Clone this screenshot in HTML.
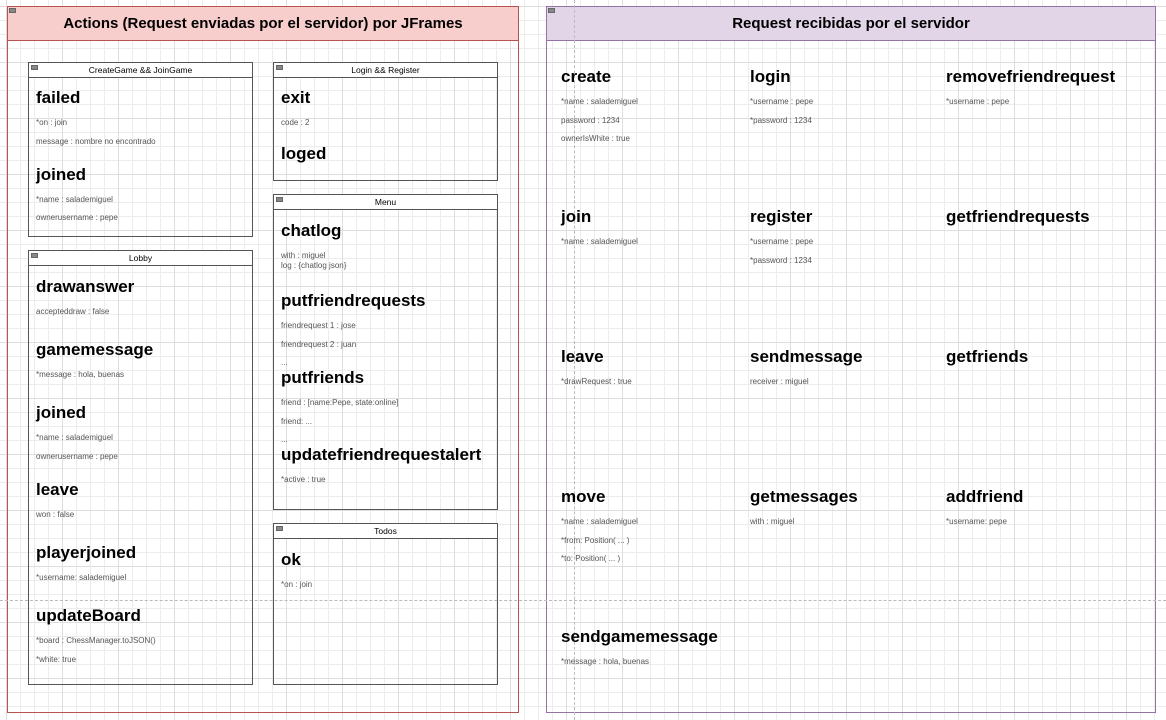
<!DOCTYPE html>
<html><head><meta charset="utf-8"><style>
*{margin:0;padding:0;box-sizing:border-box}
body{width:1166px;height:720px;overflow:hidden;position:relative;font-family:"Liberation Sans",Arial,sans-serif;background:#fff;
background-image:linear-gradient(#dedede 1px,transparent 1px),linear-gradient(90deg,#dedede 1px,transparent 1px),linear-gradient(#ececec 1px,transparent 1px),linear-gradient(90deg,#ececec 1px,transparent 1px);
background-size:56px 56px,56px 56px,14px 14px,14px 14px;background-position:6px 6px}
.a{position:absolute}
.box{position:absolute;border:1px solid #555}
.hd{position:absolute;left:0;right:0;top:0;height:15px;border-bottom:1px solid #555;background:#fff;font-size:8.5px;text-align:center;line-height:14px;color:#000}
.mn{position:absolute;left:2px;top:2px;width:7px;height:5px;background:#888;border:1px solid #666}
.t{position:absolute;font-size:17px;font-weight:bold;line-height:20px;white-space:nowrap;color:#000;margin-top:1px}
.p{position:absolute;font-size:8px;line-height:10px;color:#555;white-space:nowrap}
</style></head><body>
<div class="a" style="left:7px;top:6px;width:512px;height:707px;border:1px solid #b85450"></div>
<div class="a" style="left:7px;top:6px;width:512px;height:35px;border:1px solid #b85450;background:#f8cecc;font-size:15px;font-weight:bold;text-align:center;line-height:33px">Actions (Request enviadas por el servidor) por JFrames</div>
<div class="mn" style="left:9px;top:8px"></div>
<div class="a" style="left:546px;top:6px;width:610px;height:707px;border:1px solid #9673a6"></div>
<div class="a" style="left:546px;top:6px;width:610px;height:35px;border:1px solid #9673a6;background:#e1d5e7;font-size:15px;font-weight:bold;text-align:center;line-height:33px">Request recibidas por el servidor</div>
<div class="mn" style="left:548px;top:8px"></div>
<div class="a" style="left:574px;top:0;height:720px;border-left:1px dashed #bbb"></div>
<div class="a" style="left:0;top:600px;width:1166px;border-top:1px dashed #bbb"></div>

<div class="box" style="left:28px;top:62px;width:225px;height:175px"><div class="hd">CreateGame &amp;&amp; JoinGame</div><div class="mn"></div></div>
<div class="box" style="left:273px;top:62px;width:225px;height:119px"><div class="hd">Login &amp;&amp; Register</div><div class="mn"></div></div>
<div class="box" style="left:273px;top:194px;width:225px;height:316px"><div class="hd">Menu</div><div class="mn"></div></div>
<div class="box" style="left:28px;top:250px;width:225px;height:435px"><div class="hd">Lobby</div><div class="mn"></div></div>
<div class="box" style="left:273px;top:523px;width:225px;height:162px"><div class="hd">Todos</div><div class="mn"></div></div>

<div class="t" style="left:36px;top:87px">failed</div>
<div class="p" style="left:36px;top:118px">*on : join</div>
<div class="p" style="left:36px;top:137px">message : nombre no encontrado</div>
<div class="t" style="left:36px;top:164px">joined</div>
<div class="p" style="left:36px;top:195px">*name : salademiguel</div>
<div class="p" style="left:36px;top:213px">ownerusername : pepe</div>

<div class="t" style="left:281px;top:87px">exit</div>
<div class="p" style="left:281px;top:118px">code : 2</div>
<div class="t" style="left:281px;top:143px">loged</div>

<div class="t" style="left:281px;top:220px">chatlog</div>
<div class="p" style="left:281px;top:251px">with : miguel</div>
<div class="p" style="left:281px;top:261px">log : {chatlog json}</div>
<div class="t" style="left:281px;top:290px">putfriendrequests</div>
<div class="p" style="left:281px;top:321px">friendrequest 1 : jose</div>
<div class="p" style="left:281px;top:340px">friendrequest 2 : juan</div>
<div class="p" style="left:281px;top:358px">...</div>
<div class="t" style="left:281px;top:367px">putfriends</div>
<div class="p" style="left:281px;top:398px">friend : [name:Pepe, state:online]</div>
<div class="p" style="left:281px;top:417px">friend: ...</div>
<div class="p" style="left:281px;top:435px">...</div>
<div class="t" style="left:281px;top:444px">updatefriendrequestalert</div>
<div class="p" style="left:281px;top:475px">*active : true</div>

<div class="t" style="left:36px;top:276px">drawanswer</div>
<div class="p" style="left:36px;top:307px">accepteddraw : false</div>
<div class="t" style="left:36px;top:339px">gamemessage</div>
<div class="p" style="left:36px;top:370px">*message : hola, buenas</div>
<div class="t" style="left:36px;top:402px">joined</div>
<div class="p" style="left:36px;top:433px">*name : salademiguel</div>
<div class="p" style="left:36px;top:452px">ownerusername : pepe</div>
<div class="t" style="left:36px;top:479px">leave</div>
<div class="p" style="left:36px;top:510px">won : false</div>
<div class="t" style="left:36px;top:542px">playerjoined</div>
<div class="p" style="left:36px;top:573px">*username: salademiguel</div>
<div class="t" style="left:36px;top:605px">updateBoard</div>
<div class="p" style="left:36px;top:636px">*board : ChessManager.toJSON()</div>
<div class="p" style="left:36px;top:655px">*white: true</div>

<div class="t" style="left:281px;top:549px">ok</div>
<div class="p" style="left:281px;top:580px">*on : join</div>

<div class="t" style="left:561px;top:66px">create</div>
<div class="p" style="left:561px;top:97px">*name : salademiguel</div>
<div class="p" style="left:561px;top:116px">password : 1234</div>
<div class="p" style="left:561px;top:134px">ownerIsWhite : true</div>
<div class="t" style="left:750px;top:66px">login</div>
<div class="p" style="left:750px;top:97px">*username : pepe</div>
<div class="p" style="left:750px;top:116px">*password : 1234</div>
<div class="t" style="left:946px;top:66px">removefriendrequest</div>
<div class="p" style="left:946px;top:97px">*username : pepe</div>

<div class="t" style="left:561px;top:206px">join</div>
<div class="p" style="left:561px;top:237px">*name : salademiguel</div>
<div class="t" style="left:750px;top:206px">register</div>
<div class="p" style="left:750px;top:237px">*username : pepe</div>
<div class="p" style="left:750px;top:256px">*password : 1234</div>
<div class="t" style="left:946px;top:206px">getfriendrequests</div>

<div class="t" style="left:561px;top:346px">leave</div>
<div class="p" style="left:561px;top:377px">*drawRequest : true</div>
<div class="t" style="left:750px;top:346px">sendmessage</div>
<div class="p" style="left:750px;top:377px">receiver : miguel</div>
<div class="t" style="left:946px;top:346px">getfriends</div>

<div class="t" style="left:561px;top:486px">move</div>
<div class="p" style="left:561px;top:517px">*name : salademiguel</div>
<div class="p" style="left:561px;top:536px">*from: Position( ... )</div>
<div class="p" style="left:561px;top:554px">*to: Position( ... )</div>
<div class="t" style="left:750px;top:486px">getmessages</div>
<div class="p" style="left:750px;top:517px">with : miguel</div>
<div class="t" style="left:946px;top:486px">addfriend</div>
<div class="p" style="left:946px;top:517px">*username: pepe</div>

<div class="t" style="left:561px;top:626px">sendgamemessage</div>
<div class="p" style="left:561px;top:657px">*message : hola, buenas</div>
</body></html>
